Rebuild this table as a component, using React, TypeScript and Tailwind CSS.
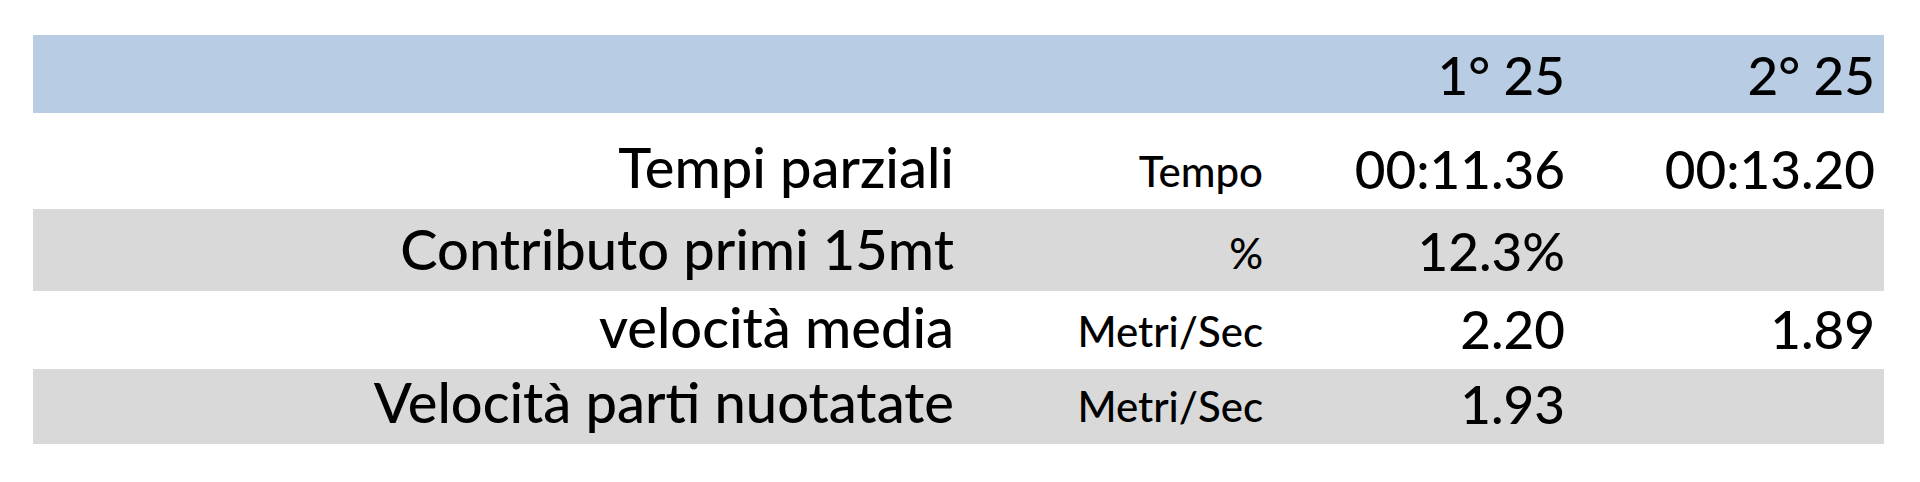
import React from 'react';

type Row = {
  label: string;
  unit: string;
  first: string;
  second: string;
  height: string;
  shaded: boolean;
};

const rows: Row[] = [
  { label: 'Tempi parziali', unit: 'Tempo', first: '00:11.36', second: '00:13.20', height: 'h-[96px]', shaded: false },
  { label: 'Contributo primi 15mt', unit: '%', first: '12.3%', second: '', height: 'h-[82px]', shaded: true },
  { label: 'velocità media', unit: 'Metri/Sec', first: '2.20', second: '1.89', height: 'h-[78px]', shaded: false },
  { label: 'Velocità parti nuotatate', unit: 'Metri/Sec', first: '1.93', second: '', height: 'h-[75px]', shaded: true },
];

const cols = 'grid grid-cols-[927px_310px_302px_312px]';

export default function App() {
  return (
    <div className="w-[1920px] h-[482px] bg-white pt-[35px] pl-[33px] font-['Lato','Open_Sans',sans-serif] font-medium text-black">
      <div className="w-[1851px]">
        <div className={`${cols} h-[78px] bg-[#b8cce4] text-[53px] leading-none`}>
          <div />
          <div />
          <div className="flex items-end justify-end pr-[7px] pb-[12px]">1° 25</div>
          <div className="flex items-end justify-end pr-[9px] pb-[12px]">2° 25</div>
        </div>

        {rows.map((row) => (
          <div
            key={row.label}
            className={`${cols} ${row.height} ${row.shaded ? 'bg-[#d9d9d9]' : 'bg-white'} leading-none`}
          >
            <div className="flex items-end justify-end pr-[6px] pb-[14px] text-[56px]">{row.label}</div>
            <div className="flex items-end justify-end pr-[7px] pb-[17px] text-[42px]">{row.unit}</div>
            <div className="flex items-end justify-end pr-[7px] pb-[14px] text-[53px]">{row.first}</div>
            <div className="flex items-end justify-end pr-[9px] pb-[14px] text-[53px]">{row.second}</div>
          </div>
        ))}
      </div>
    </div>
  );
}
